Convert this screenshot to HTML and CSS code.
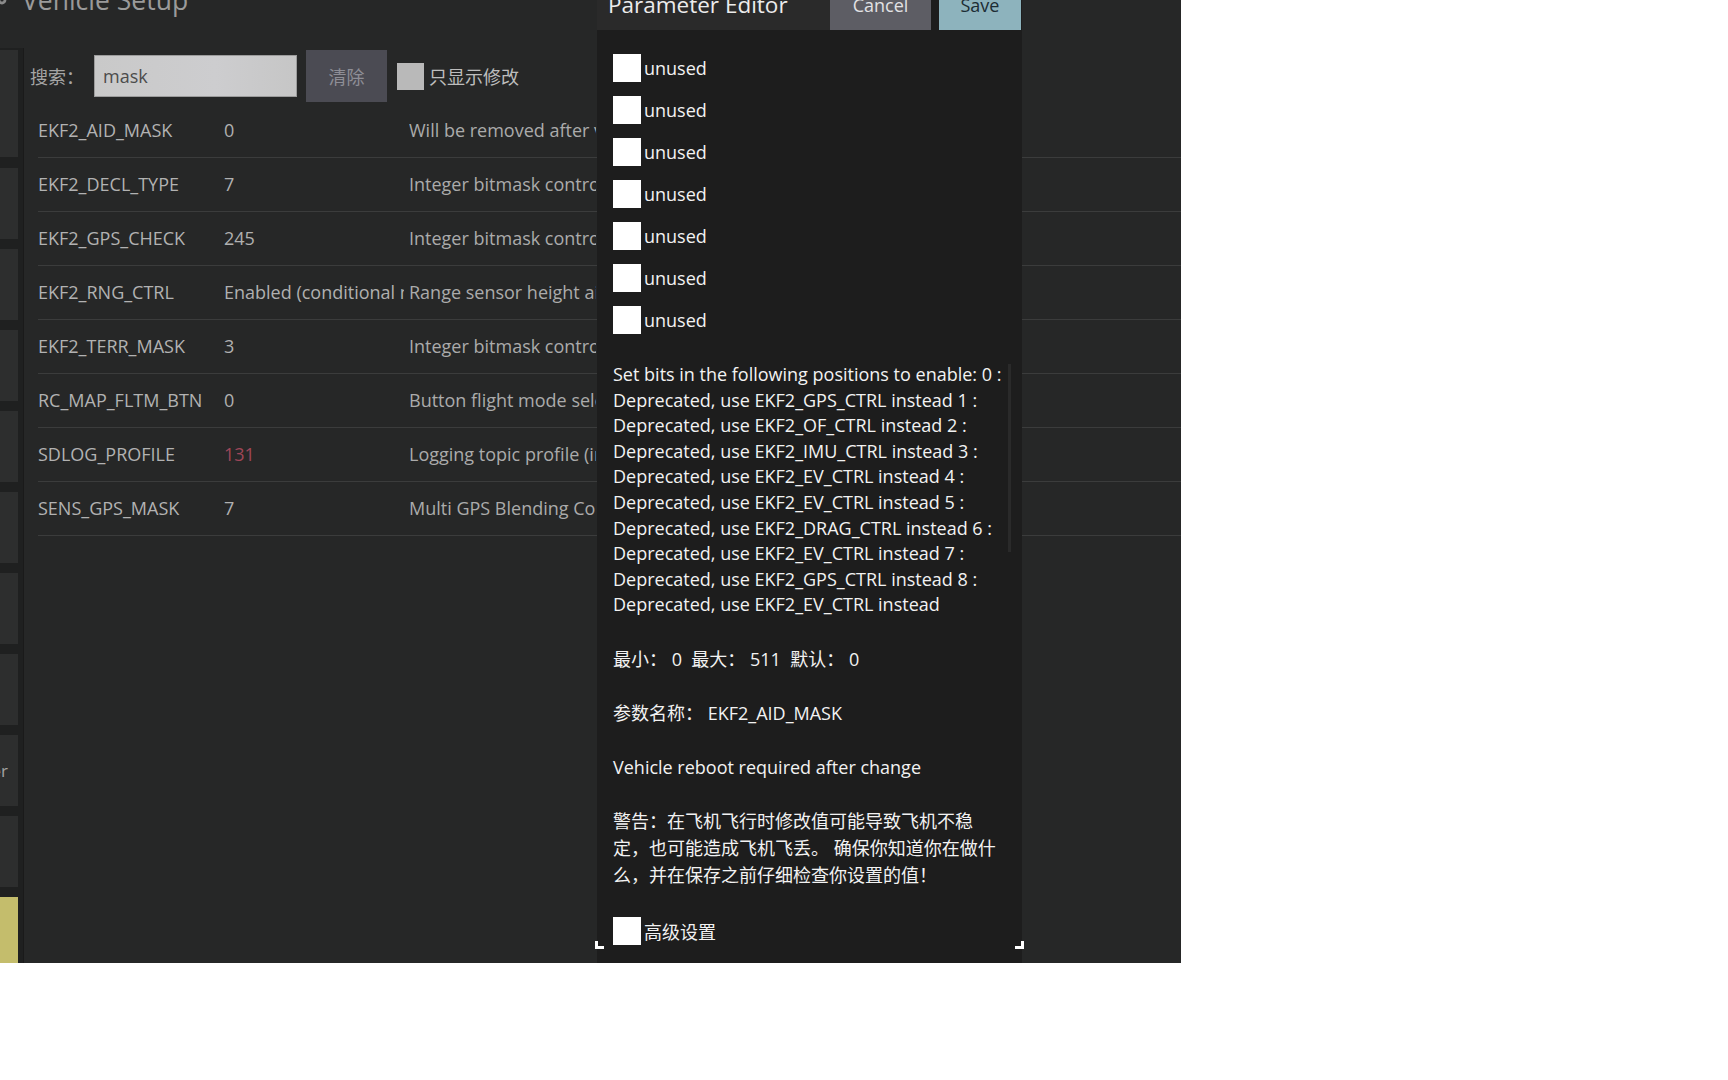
FILE: index.html
```html
<!DOCTYPE html>
<html lang="zh">
<head>
<meta charset="utf-8">
<title>Vehicle Setup - Parameter Editor</title>
<link rel="stylesheet" href="styles.css">
</head>
<body>
<div class="app">
  <header class="topbar">
    <h1 class="title">
      <svg class="title-icon" viewBox="0 0 12 12" width="12" height="12" aria-hidden="true">
        <circle cx="6" cy="6" r="4.4" fill="#8a8a8a"/>
        <circle cx="6" cy="6" r="1.6" fill="#262727"/>
      </svg>
      <span>Vehicle Setup</span>
    </h1>
  </header>
  <div class="main">
    <nav class="rail">
      <div class="rail-item rail-item-tall"></div>
      <div class="rail-item"></div>
      <div class="rail-item"></div>
      <div class="rail-item"></div>
      <div class="rail-item"></div>
      <div class="rail-item"></div>
      <div class="rail-item"></div>
      <div class="rail-item"></div>
      <div class="rail-item rail-item-label"><span>Power</span></div>
      <div class="rail-item"></div>
      <div class="rail-item rail-item-active"></div>
    </nav>
    <section class="params">
      <div class="search-row">
        <span class="search-label">搜索：</span>
        <div class="search-input">mask</div>
        <button class="btn-clear">清除</button>
        <span class="check-dim"></span>
        <span class="check-label">只显示修改</span>
      </div>
      <div class="param-table">
        <div class="param-row"><span class="p-name">EKF2_AID_MASK</span><span class="p-value">0</span><span class="p-desc">Will be removed after v1.14 or later</span></div>
        <div class="param-row"><span class="p-name">EKF2_DECL_TYPE</span><span class="p-value">7</span><span class="p-desc">Integer bitmask controlling handling of magnetic declination</span></div>
        <div class="param-row"><span class="p-name">EKF2_GPS_CHECK</span><span class="p-value">245</span><span class="p-desc">Integer bitmask controlling GPS checks</span></div>
        <div class="param-row"><span class="p-name">EKF2_RNG_CTRL</span><span class="p-value">Enabled (conditional mode)</span><span class="p-desc">Range sensor height aiding</span></div>
        <div class="param-row"><span class="p-name">EKF2_TERR_MASK</span><span class="p-value">3</span><span class="p-desc">Integer bitmask controlling fusion sources of the terrain estimator</span></div>
        <div class="param-row"><span class="p-name">RC_MAP_FLTM_BTN</span><span class="p-value">0</span><span class="p-desc">Button flight mode selection</span></div>
        <div class="param-row"><span class="p-name">SDLOG_PROFILE</span><span class="p-value p-value-mod">131</span><span class="p-desc">Logging topic profile (integer bitmask)</span></div>
        <div class="param-row"><span class="p-name">SENS_GPS_MASK</span><span class="p-value">7</span><span class="p-desc">Multi GPS Blending Control Mask</span></div>
      </div>
    </section>
  </div>

  <div class="dialog">
    <div class="dialog-header">
      <div class="dialog-title">Parameter Editor</div>
      <button class="btn-cancel">Cancel</button>
      <button class="btn-save">Save</button>
    </div>
    <div class="dialog-body">
      <div class="bit-list">
        <div class="bit-row"><span class="check"></span><span>unused</span></div>
        <div class="bit-row"><span class="check"></span><span>unused</span></div>
        <div class="bit-row"><span class="check"></span><span>unused</span></div>
        <div class="bit-row"><span class="check"></span><span>unused</span></div>
        <div class="bit-row"><span class="check"></span><span>unused</span></div>
        <div class="bit-row"><span class="check"></span><span>unused</span></div>
        <div class="bit-row"><span class="check"></span><span>unused</span></div>
      </div>
      <p class="desc">Set bits in the following positions to enable: 0 :<br>Deprecated, use EKF2_GPS_CTRL instead 1 :<br>Deprecated, use EKF2_OF_CTRL instead 2 :<br>Deprecated, use EKF2_IMU_CTRL instead 3 :<br>Deprecated, use EKF2_EV_CTRL instead 4 :<br>Deprecated, use EKF2_EV_CTRL instead 5 :<br>Deprecated, use EKF2_DRAG_CTRL instead 6 :<br>Deprecated, use EKF2_EV_CTRL instead 7 :<br>Deprecated, use EKF2_GPS_CTRL instead 8 :<br>Deprecated, use EKF2_EV_CTRL instead</p>
      <p class="info">最小： 0&nbsp; 最大： 511&nbsp; 默认： 0</p>
      <p class="info">参数名称： EKF2_AID_MASK</p>
      <p class="info">Vehicle reboot required after change</p>
      <p class="warn">警告：在飞机飞行时修改值可能导致飞机不稳<br>定，也可能造成飞机飞丢。 确保你知道你在做什<br>么，并在保存之前仔细检查你设置的值！</p>
      <div class="bit-row"><span class="check"></span><span>高级设置</span></div>
    </div>
    <span class="scroll-thumb"></span>
    <span class="corner corner-left"></span>
    <span class="corner corner-right"></span>
  </div>
</div>
</body>
</html>
```
FILE: styles.css
```css
* { box-sizing: border-box; }

body {
  margin: 0;
  background: #ffffff;
  font-family: "Open Sans", "Noto Sans CJK SC", sans-serif;
}

.app {
  position: relative;
  width: 1181px;
  height: 963px;
  background: #262727;
  overflow: hidden;
  display: flex;
  flex-direction: column;
  font-size: 18px;
  color: #acacac;
}

/* ---------- top bar ---------- */
.topbar {
  height: 48px;
  flex: none;
  display: flex;
  align-items: flex-start;
}

.title {
  margin: -13px 0 0 -4px;
  display: flex;
  align-items: center;
  gap: 14px;
  font-size: 26.5px;
  line-height: 26px;
  font-weight: 400;
  color: #9a9a9a;
}

.title-icon { flex: none; }

/* ---------- main ---------- */
.main {
  flex: 1;
  display: flex;
  min-height: 0;
}

.rail {
  width: 24px;
  flex: none;
  display: flex;
  flex-direction: column;
  gap: 10px;
  padding: 2px 5px 0 0;
  background: #1f2020;
  border-right: 1px solid #1a1a1a;
}

.rail-item {
  height: 71px;
  flex: none;
  background: #2d2e2e;
}

.rail-item-tall {
  height: 107px;
  margin-bottom: 1px;
}

.rail-item-label {
  display: flex;
  align-items: center;
  justify-content: flex-end;
  padding-right: 10px;
  overflow: hidden;
  font-size: 17px;
  color: #a3a3a3;
  white-space: nowrap;
}

.rail-item-active {
  flex: 1;
  background: #c4bd6c;
}

.params {
  flex: 1;
  min-width: 0;
  display: flex;
  flex-direction: column;
}

.search-row {
  height: 52px;
  margin-top: 2px;
  padding-left: 6px;
  display: flex;
  align-items: center;
}

.search-label {
  width: 54px;
  margin-right: 10px;
  color: #a5a5a5;
}

.search-input {
  width: 203px;
  height: 42px;
  margin-right: 9px;
  padding-left: 8px;
  display: flex;
  align-items: center;
  background: linear-gradient(90deg, #c9c9c9 0%, #cdcdcf 60%, #c6c6c6 100%);
  border: 1px solid #9c9c9c;
  color: #4c4c4c;
}

.btn-clear {
  width: 81px;
  height: 52px;
  margin-right: 10px;
  border: 0;
  background: #4b4b53;
  color: #8e8e96;
  font: inherit;
  font-size: 18px;
  padding: 0;
}

.check-dim {
  width: 27px;
  height: 27px;
  margin-right: 5px;
  background: #b9b9b9;
}

.check-label { color: #bdbdbd; }

.param-table {
  margin: 2px 0 0 14px;
  display: flex;
  flex-direction: column;
}

.param-row {
  height: 54px;
  display: grid;
  grid-template-columns: 181px 180px 187px;
  column-gap: 5px;
  align-items: center;
  border-bottom: 1px solid #3b3c3c;
  white-space: nowrap;
}

.p-name, .p-value, .p-desc {
  overflow: hidden;
  line-height: 24px;
  margin-top: -2px;
}

.p-name { color: #b2b2b2; }
.p-value { color: #b0b0b0; }
.p-value-mod { color: #9e4658; }
.p-desc { color: #ababab; }

/* ---------- dialog ---------- */
.dialog {
  position: absolute;
  left: 597px;
  top: -21px;
  bottom: 0;
  width: 425px;
  background: #1d1d1d;
  color: #f2f2f2;
}

.dialog-header {
  height: 51px;
  display: flex;
}

.dialog-title {
  width: 233px;
  padding-left: 11px;
  display: flex;
  align-items: center;
  background: #2a2a2a;
  font-size: 22.5px;
  color: #ececec;
}

.btn-cancel, .btn-save {
  border: 0;
  padding: 0;
  font: inherit;
  font-size: 18px;
}

.btn-cancel {
  width: 101px;
  margin-right: 8px;
  background: #5d5d64;
  color: #e2e2e4;
}

.btn-save {
  width: 82px;
  background: #8db3bd;
  color: #1c2c34;
}

.dialog-body {
  padding: 24px 19px 0 16px;
  display: flex;
  flex-direction: column;
  gap: 28px;
}

.bit-list {
  display: flex;
  flex-direction: column;
  gap: 14px;
}

.bit-row {
  height: 28px;
  display: flex;
  align-items: center;
  gap: 3px;
  white-space: nowrap;
}

.check {
  width: 28px;
  height: 28px;
  flex: none;
  background: #ffffff;
}

.desc, .info, .warn {
  margin: 0;
  white-space: nowrap;
}

.desc { line-height: 25.6px; }
.info { line-height: 26px; }
.warn { line-height: 27px; }

.scroll-thumb {
  position: absolute;
  left: 411px;
  top: 385px;
  width: 3px;
  height: 188px;
  background: #2a2a2a;
}

.corner {
  position: absolute;
  bottom: 14px;
  width: 9px;
  height: 8px;
  border-bottom: 3px solid #ffffff;
}

.corner-left {
  left: -2px;
  border-left: 3px solid #ffffff;
}

.corner-right {
  right: -2px;
  border-right: 3px solid #ffffff;
}
```
